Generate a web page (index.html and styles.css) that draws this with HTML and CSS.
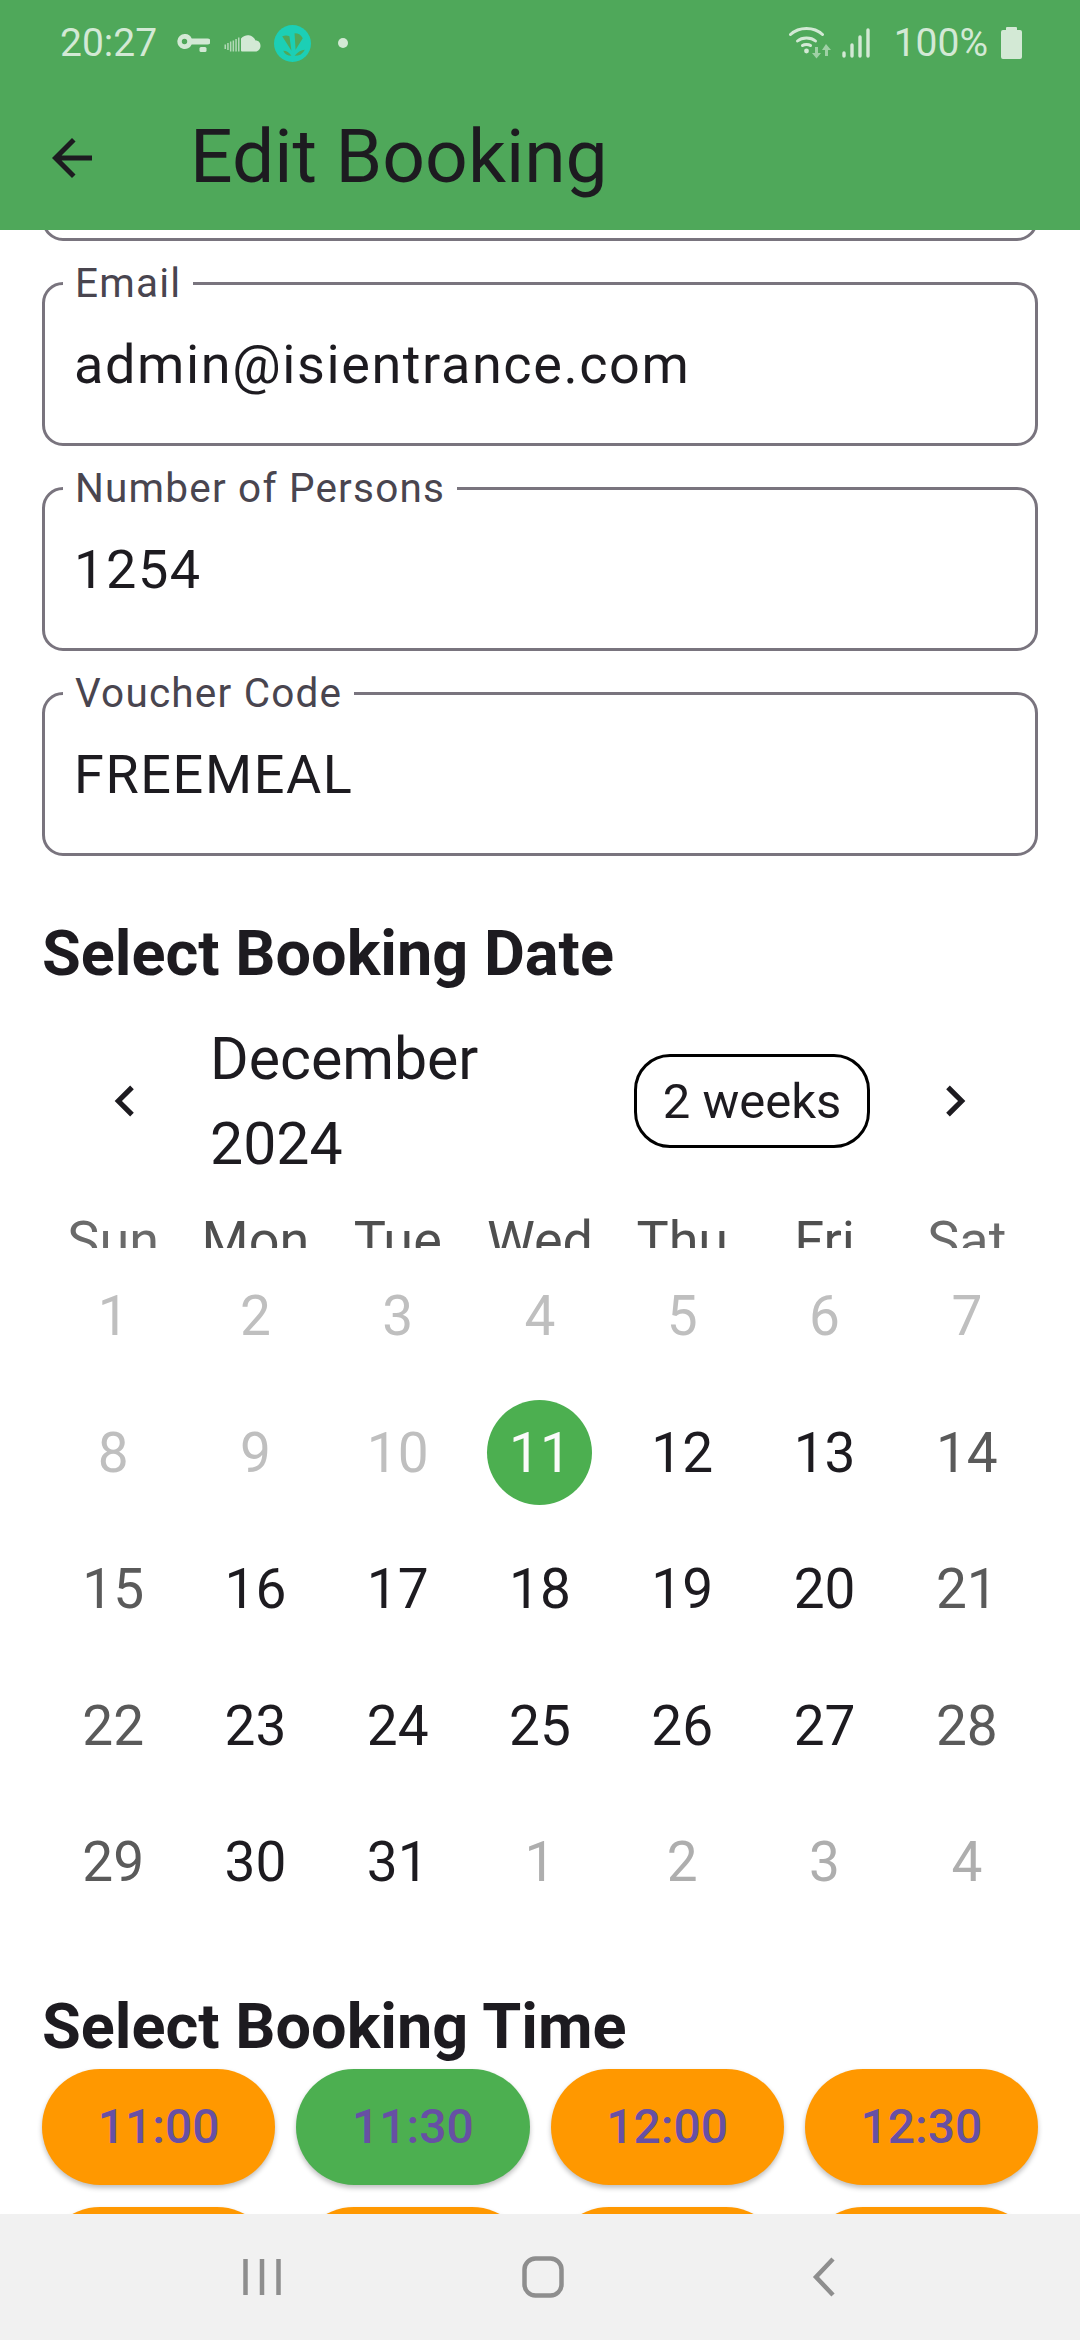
FILE: index.html
```html
<!DOCTYPE html>
<html lang="en">

<head>
    <meta charset="UTF-8">
    <meta name="viewport" content="width=device-width, initial-scale=1.0">
    <title>Edit Booking</title>
    <link rel="stylesheet" href="styles.css">
</head>

<body>
    <div class="screen">
        <header class="appbar">
            <div class="statusbar">
                <div class="status-left">
                    <span class="clock">20:27</span>
                    <svg class="ico-key" viewBox="0 0 33 19"><path fill-rule="evenodd" d="M7.500 0a7.500 7.500 0 0 1 7.200 4.500H30.500a3 3 0 0 1 0 6H14.700A7.500 7.500 0 1 1 7.500 0zm0 4.800a2.700 2.700 0 1 0 0 5.400 2.700 2.700 0 0 0 0-5.400z"/><rect x="22.500" y="13" width="7" height="5" rx="1.500"/></svg>
                    <svg class="ico-cloud" viewBox="0 0 36 18"><path d="M16.500 4.500a8.500 8.500 0 0 1 14.500 2c2.800-.2 5 2 5 5.200S33.800 17.500 31 17.500H17.500a1 1 0 0 1-1-1z"/><path opacity=".75" d="M13.500 3.500h1.500v14h-1.500zM10.800 5h1.500v12.500h-1.500zM8.100 6.500h1.500v11H8.100zM5.400 7.500h1.500v10H5.400zM2.700 9h1.500v7H2.700zM0 10.500h1.500v4.500H0z"/></svg>
                    <svg class="ico-saavn" viewBox="0 0 36 36"><circle cx="18" cy="18" r="18" fill="#1ccfb5"/><path fill="#4fa85a" d="M8 11Q12 9.500 15 11L17 25zM20 8Q26 8 28 13L21 24zM9 25Q14 25 17 30 11 30 9 25zM30 24Q25 24 20 30 27 30 30 24z"/></svg>
                    <span class="dot"></span>
                </div>
                <div class="status-right">
                    <svg class="ico-wifi" viewBox="0 0 42 32"><g fill="none" stroke="#d3e9d5" stroke-width="3" stroke-linecap="round"><path d="M1.500 7.500C10 -0.500 25 -0.500 33.500 7.500"/><path d="M8.500 14C13 10 22 10 26.500 14"/><path d="M13.500 18.500C15.500 17 19.500 17 21.500 18.500"/></g><circle cx="17.500" cy="24" r="2.400" fill="#d3e9d5"/><path fill="#9fd0a5" d="M26 20h3v6h3l-4.500 5.500L23 26h3zM37 17l5 6h-3v6h-3v-6h-3z"/></svg>
                    <svg class="ico-signal" viewBox="0 0 28 30"><g fill="none" stroke="#d3e9d5" stroke-width="3.400" stroke-linecap="round"><path d="M2 25v3M10 17v11M18 9v19M26 2v26"/></g></svg>
                    <span class="battery-text">100%</span>
                    <svg class="ico-battery" viewBox="0 0 21 32"><path d="M6 0h9a1 1 0 0 1 1 1v2h3a2 2 0 0 1 2 2v25a2 2 0 0 1-2 2H2a2 2 0 0 1-2-2V5a2 2 0 0 1 2-2h3V1a1 1 0 0 1 1-1z"/></svg>
                </div>
            </div>
            <div class="toolbar">
                <svg class="ico-back" viewBox="0 0 24 24"><path d="M20 11H7.830l5.590-5.590L12 4l-8 8 8 8 1.410-1.410L7.830 13H20v-2z"/></svg>
                <h1>Edit Booking</h1>
            </div>
        </header>

        <main class="content">
            <div class="fields">
                <fieldset class="field"><legend></legend></fieldset>
                <fieldset class="field">
                    <legend>Email</legend>
                    <div class="value">admin@isientrance.com</div>
                </fieldset>
                <fieldset class="field">
                    <legend>Number of Persons</legend>
                    <div class="value">1254</div>
                </fieldset>
                <fieldset class="field">
                    <legend>Voucher Code</legend>
                    <div class="value">FREEMEAL</div>
                </fieldset>
            </div>

            <h2 class="section-title">Select Booking Date</h2>

            <div class="cal-header">
                <svg class="chevron" viewBox="0 0 24 24"><path d="M15.410 7.410 14 6l-6 6 6 6 1.410-1.410L10.830 12z"/></svg>
                <div class="cal-month">December 2024</div>
                <div class="format-btn">2 weeks</div>
                <svg class="chevron" viewBox="0 0 24 24"><path d="M10 6 8.590 7.410 13.170 12l-4.580 4.590L10 18l6-6z"/></svg>
            </div>

            <div class="weekdays">
                <span class="wkend">Sun</span><span>Mon</span><span>Tue</span><span>Wed</span><span>Thu</span><span>Fri</span><span class="wkend">Sat</span>
            </div>

            <div class="days">
                <span class="off">1</span><span class="off">2</span><span class="off">3</span><span class="off">4</span><span class="off">5</span><span class="off">6</span><span class="off">7</span>
                <span class="off">8</span><span class="off">9</span><span class="off">10</span><span class="selected">11</span><span>12</span><span>13</span><span class="wkend">14</span>
                <span class="wkend">15</span><span>16</span><span>17</span><span>18</span><span>19</span><span>20</span><span class="wkend">21</span>
                <span class="wkend">22</span><span>23</span><span>24</span><span>25</span><span>26</span><span>27</span><span class="wkend">28</span>
                <span class="wkend">29</span><span>30</span><span>31</span><span class="outside">1</span><span class="outside">2</span><span class="outside">3</span><span class="outside">4</span>
            </div>

            <h2 class="section-title time-title">Select Booking Time</h2>

            <div class="slots">
                <div class="slot">11:00</div>
                <div class="slot active">11:30</div>
                <div class="slot">12:00</div>
                <div class="slot">12:30</div>
                <div class="slot"></div>
                <div class="slot"></div>
                <div class="slot"></div>
                <div class="slot"></div>
            </div>
        </main>

        <nav class="navbar">
            <svg class="nav-recent" viewBox="0 0 38 40"><path d="M2.500 2v36M19 2v36M35.500 2v36"/></svg>
            <svg class="nav-home" viewBox="0 0 42 42"><rect x="2.500" y="2.500" width="37" height="37" rx="11"/></svg>
            <svg class="nav-back" viewBox="0 0 24 40"><path d="M21 2 4 20l17 18"/></svg>
        </nav>
    </div>
</body>

</html>
```

FILE: styles.css
```css
* {
    box-sizing: border-box;
}

html, body {
    margin: 0;
    padding: 0;
    background-color: white;
}

body {
    font-family: Roboto, "Liberation Sans", sans-serif;
    color: #1d1b20;
}

.screen {
    width: 1080px;
    height: 2340px;
    display: flex;
    flex-direction: column;
    overflow: hidden;
}

/* top bar */
.appbar {
    height: 230px;
    flex: none;
    background-color: #4fa85a;
    position: relative;
    z-index: 1;
}

.statusbar {
    height: 86px;
    padding: 0 58px 0 60px;
    display: flex;
    justify-content: space-between;
    align-items: center;
    color: #d3e9d5;
    font-size: 39px;
}

.status-left, .status-right {
    display: flex;
    align-items: center;
}

.statusbar svg {
    fill: #d3e9d5;
    display: block;
}

.ico-key {
    width: 33px;
    height: 19px;
    margin-left: 20px;
}

.ico-cloud {
    width: 37px;
    height: 18px;
    margin-left: 14px;
}

.ico-saavn {
    width: 37px;
    height: 37px;
    margin-left: 13px;
}

.dot {
    width: 10px;
    height: 10px;
    margin-left: 27px;
    border-radius: 50%;
    background-color: #d3e9d5;
}

.ico-wifi {
    width: 42px;
    height: 32px;
}

.ico-signal {
    width: 28px;
    height: 30px;
    margin-left: 11px;
}

.battery-text {
    margin-left: 24px;
}

.ico-battery {
    width: 21px;
    height: 32px;
    margin-left: 13px;
}

.toolbar {
    height: 144px;
    display: flex;
    align-items: center;
    padding-left: 42px;
}

.ico-back {
    width: 60px;
    height: 60px;
    fill: #1d1b20;
    flex: none;
}

.toolbar h1 {
    margin: 0 0 0 88px;
    font-size: 75px;
    font-weight: 400;
    position: relative;
    top: -2px;
}

/* scrolled page */
.content {
    flex: 1;
    min-height: 0;
    overflow: hidden;
    padding: 0 42px;
}

.fields {
    margin-top: -170px;
    display: flex;
    flex-direction: column;
    gap: 24px;
}

.field {
    margin: 0;
    padding: 0 29px;
    height: 181px;
    border: 3px solid #79747e;
    border-radius: 21px;
}

.field legend {
    margin-left: -11px;
    padding: 0 12px;
    height: 36px;
    font-size: 40.500px;
    line-height: 36px;
    letter-spacing: 1.200px;
    color: #49454f;
}

.value {
    margin-top: 32px;
    font-size: 54px;
    line-height: 64px;
    letter-spacing: 1.600px;
}

.section-title {
    margin: 66px 0 0;
    font-size: 63px;
    line-height: 64px;
    font-weight: 700;
}

.cal-header {
    margin-top: 30px;
    height: 170px;
    display: flex;
    align-items: center;
    padding: 0 52px;
}

.chevron {
    width: 62px;
    height: 62px;
    flex: none;
    fill: #1d1b20;
}

.cal-month {
    margin-left: 54px;
    width: 300px;
    font-size: 59px;
    line-height: 85px;
}

.format-btn {
    margin-left: 124px;
    width: 236px;
    height: 94px;
    border: 3px solid black;
    border-radius: 36px;
    display: flex;
    align-items: center;
    justify-content: center;
    font-size: 49px;
}

.chevron:last-child {
    margin-left: auto;
}

/* weekday row is cut by its own box, the text does not fit */
.weekdays {
    margin-top: 24px;
    height: 38px;
    overflow: hidden;
    display: grid;
    grid-template-columns: repeat(7, 1fr);
    text-align: center;
    font-size: 54px;
    line-height: 62px;
    color: #4f4f4f;
}

.weekdays .wkend {
    color: #6a6a6a;
}

.days {
    display: grid;
    grid-template-columns: repeat(7, 1fr);
    grid-auto-rows: 136.500px;
    justify-items: center;
    align-items: center;
    font-size: 55px;
}

.days .wkend {
    color: #5a5a5a;
}

.days .off {
    color: #bfbfbf;
}

.days .outside {
    color: #aeaeae;
}

.days .selected {
    width: 105px;
    height: 105px;
    border-radius: 50%;
    background-color: #4caf50;
    color: #fafafa;
    display: flex;
    align-items: center;
    justify-content: center;
}

.time-title {
    margin-top: 64px;
}

.slots {
    margin-top: 10px;
    display: grid;
    grid-template-columns: repeat(4, 1fr);
    gap: 22px 21px;
}

.slot {
    height: 116px;
    border-radius: 58px;
    background-color: #ff9800;
    color: #6750a4;
    display: flex;
    align-items: center;
    justify-content: center;
    font-size: 48px;
    font-weight: 500;
    box-shadow: 0 3px 5px rgba(0, 0, 0, 0.25);
}

.slot.active {
    background-color: #4caf50;
}

/* android nav */
.navbar {
    height: 126px;
    flex: none;
    background-color: #f1f1f1;
    position: relative;
    z-index: 1;
    display: grid;
    grid-template-columns: repeat(3, 281px);
    padding-left: 121px;
    justify-items: center;
    align-items: center;
}

.navbar svg {
    fill: none;
    stroke: #8e8e8e;
    stroke-width: 4.500px;
}

.nav-recent {
    width: 38px;
    height: 40px;
}

.nav-home {
    width: 42px;
    height: 42px;
}

.nav-back {
    width: 24px;
    height: 40px;
}
```
